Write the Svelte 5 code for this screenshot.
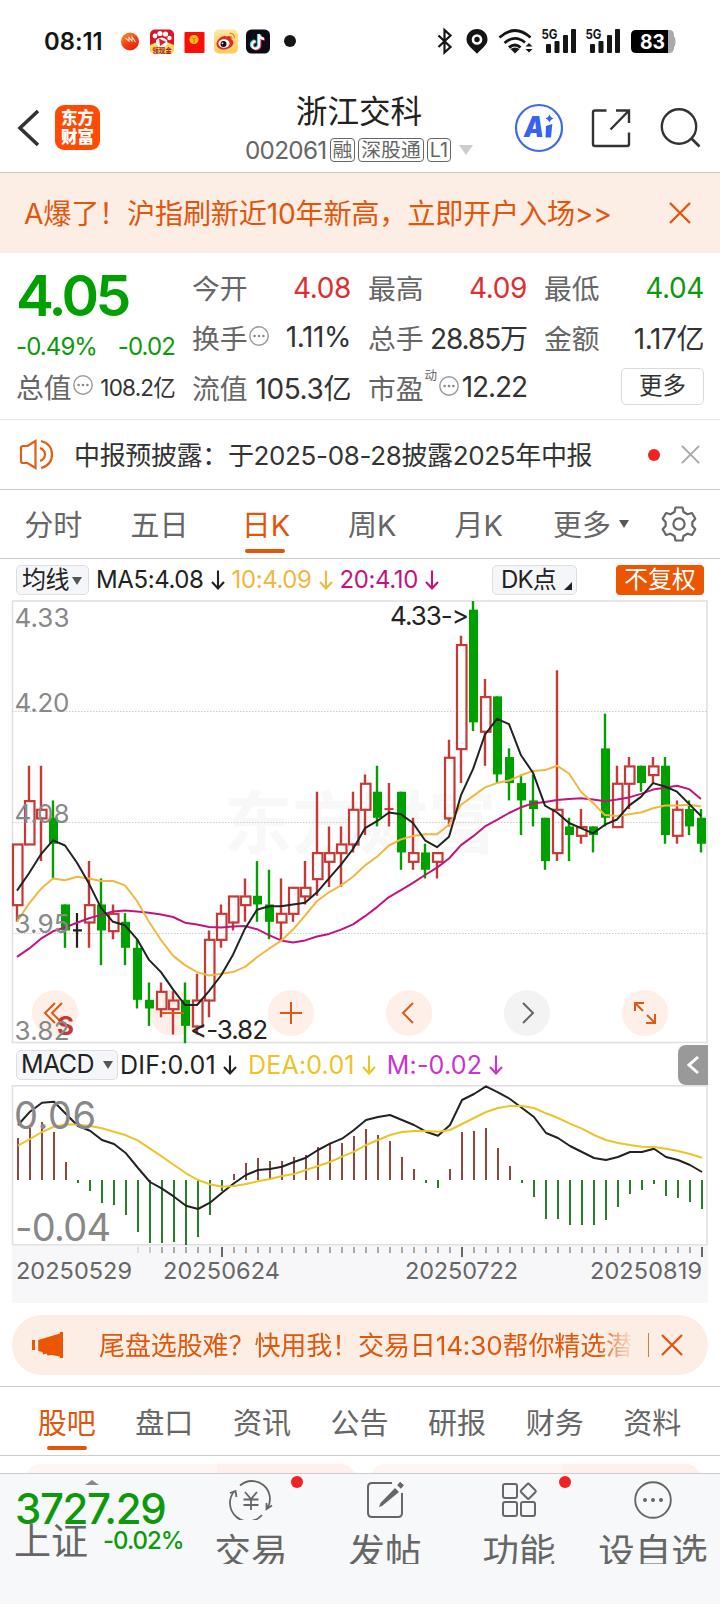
<script>
  // closes of the 19 sessions before the first visible one, needed for the averages
  const history = [
    3.91, 3.86, 3.88, 3.86, 3.84, 3.88, 3.87, 3.89, 3.91, 3.89,
    3.89, 3.92, 3.93, 3.97, 3.91, 4.0, 3.98, 3.97, 3.98
  ];

  // [open, close, high, low]
  const sessions = [
    [3.98, 4.05, 4.05, 3.96], [4.05, 4.1, 4.14, 4.05], [4.08, 4.09, 4.14, 4.03],
    [4.08, 4.05, 4.1, 4.01], [3.98, 3.95, 3.98, 3.93], [3.95, 3.95, 3.97, 3.93],
    [3.96, 3.98, 4.03, 3.93], [3.98, 3.95, 4.01, 3.91], [3.95, 3.97, 3.98, 3.94],
    [3.96, 3.93, 3.97, 3.91], [3.93, 3.87, 3.94, 3.86], [3.87, 3.86, 3.89, 3.84],
    [3.86, 3.88, 3.89, 3.85], [3.86, 3.87, 3.88, 3.83], [3.87, 3.84, 3.89, 3.82],
    [3.84, 3.87, 3.9, 3.83], [3.87, 3.94, 3.95, 3.85], [3.94, 3.97, 3.98, 3.93],
    [3.96, 3.99, 3.99, 3.95], [3.98, 3.99, 4.01, 3.96], [3.99, 3.98, 4.03, 3.96],
    [3.98, 3.96, 4.02, 3.94], [3.96, 3.97, 4.01, 3.94], [3.97, 4.0, 4.0, 3.96],
    [3.99, 4.0, 4.03, 3.98], [4.01, 4.04, 4.11, 3.99], [4.03, 4.04, 4.07, 4.0],
    [4.04, 4.05, 4.07, 4.0], [4.05, 4.09, 4.11, 4.04], [4.09, 4.12, 4.13, 4.06],
    [4.11, 4.08, 4.14, 4.07], [4.09, 4.09, 4.12, 4.07], [4.11, 4.04, 4.11, 4.02],
    [4.03, 4.04, 4.08, 4.02], [4.04, 4.02, 4.05, 4.01], [4.03, 4.04, 4.04, 4.01],
    [4.08, 4.15, 4.17, 4.07], [4.16, 4.28, 4.29, 4.12], [4.32, 4.19, 4.33, 4.18],
    [4.18, 4.22, 4.24, 4.14], [4.22, 4.13, 4.22, 4.12], [4.15, 4.12, 4.16, 4.1],
    [4.12, 4.1, 4.13, 4.06], [4.1, 4.09, 4.13, 4.07], [4.08, 4.03, 4.08, 4.02],
    [4.04, 4.09, 4.25, 4.03], [4.07, 4.06, 4.08, 4.03], [4.06, 4.07, 4.09, 4.05],
    [4.07, 4.06, 4.07, 4.04], [4.16, 4.08, 4.2, 4.07], [4.07, 4.12, 4.14, 4.07],
    [4.12, 4.14, 4.15, 4.09], [4.14, 4.12, 4.14, 4.11], [4.13, 4.14, 4.15, 4.12],
    [4.14, 4.06, 4.15, 4.05], [4.06, 4.09, 4.1, 4.05], [4.09, 4.07, 4.1, 4.06],
    [4.08, 4.05, 4.09, 4.04]
  ];

  const hist = [
    126, 156, 174, 144, 54, -9, -33, -69, -75, -105, -156, -189, -189, -186, -195, -171, -105, -33,
    18, 51, 66, 57, 57, 69, 75, 99, 108, 111, 132, 153, 135, 117, 69, 33, -9, -24, 33, 144, 147, 156,
    96, 42, -9, -51, -117, -117, -135, -135, -135, -120, -81, -42, -30, -12, -48, -54, -66, -87
  ];
  const dif = [
    165, 205, 232, 235, 198, 162, 148, 120, 108, 80, 36, -6, -26, -50, -77, -87, -68, -38, -10, 15,
    30, 33, 40, 54, 67, 90, 109, 124, 150, 180, 189, 195, 180, 165, 145, 133, 165, 240, 258, 281,
    263, 243, 216, 189, 141, 126, 102, 84, 66, 60, 69, 84, 84, 94, 69, 60, 45, 24
  ];
  const dea = [
    103, 123, 144, 160, 167, 166, 162, 155, 145, 134, 118, 94, 70, 45, 20, 0, -13, -20, -18, -12,
    -4, 3, 12, 18, 30, 42, 54, 70, 85, 105, 120, 135, 144, 147, 147, 145, 150, 168, 186, 204,
    216, 222, 222, 216, 200, 186, 169, 154, 135, 120, 111, 105, 100, 99, 94, 87, 78, 67
  ];

  const px = (i) => 17 + i * 12;
  const py = (p) => 1 + (4.33 - p) * 867;
  const my = (v) => 95 - v / 3;

  const closes = [...history, ...sessions.map((s) => s[1])];

  function average(n) {
    return sessions
      .map((_, i) => {
        const end = i + history.length + 1;
        const sum = closes.slice(end - n, end).reduce((a, b) => a + b, 0);
        return `${px(i)},${py(sum / n).toFixed(1)}`;
      })
      .join(' ');
  }

  const macdLine = (values) => values.map((v, i) => `${18 + i * 12},${my(v).toFixed(1)}`).join(' ');

  const candles = sessions.map(([open, close, high, low], i) => ({
    x: px(i),
    top: py(Math.max(open, close)),
    bottom: py(Math.min(open, close)),
    high: py(high),
    low: py(low),
    kind: i === 5 ? 'flat' : close >= open ? 'up' : 'down'
  }));

  const ticks = Array.from({ length: 48 }, (_, k) => k + 10);

  const priceLabels = [
    ['4.33', 27], ['4.20', 112], ['4.08', 223], ['3.95', 333], ['3.82', 440]
  ];
  const dates = [
    ['20250529', 16, 116], ['20250624', 163, 117], ['20250722', 405, 113], ['20250819', 590, 112]
  ];

  const periods = ['分时', '五日', '日K', '周K', '月K'];
  const sections = ['股吧', '盘口', '资讯', '公告', '研报', '财务', '资料'];
</script>

{#snippet dots()}
  <svg class="dots" width="20" height="20" viewBox="0 0 20 20">
    <circle cx="10" cy="10" r="9.2" fill="none" stroke="#999" stroke-width="1.4" />
    <g fill="#888"><circle cx="5.6" cy="10" r="1.3" /><circle cx="10" cy="10" r="1.3" /><circle cx="14.4" cy="10" r="1.3" /></g>
  </svg>
{/snippet}

{#snippet down()}
  <svg class="down" width="14" height="20" viewBox="0 0 14 20">
    <path d="M7 .5v18M1 12l6 6.5 6-6.5" fill="none" stroke="currentColor" stroke-width="2.1" />
  </svg>
{/snippet}

{#snippet cross(size)}
  <svg height={size} width={size} viewBox="0 0 22 22">
    <path d="M1 1l20 20M21 1L1 21" fill="none" stroke="currentColor" stroke-width="2.3" />
  </svg>
{/snippet}

<div class="screen" lang="zh-CN">
  <div class="status">
    <span class="time">08:11</span>
    <svg width="180" height="30" viewBox="120 27 180 30">
      <defs>
        <linearGradient id="ball" x2="0.6" y2="1"><stop offset="0" stop-color="#ff9a1f" /><stop offset="0.6" stop-color="#f2401a" /><stop offset="1" stop-color="#e8230f" /></linearGradient>
        <linearGradient id="weibo" x2="0" y2="1"><stop offset="0" stop-color="#ffe9a0" /><stop offset="1" stop-color="#fdc95a" /></linearGradient>
      </defs>
      <circle cx="130" cy="41.5" r="9" fill="url(#ball)" />
      <path d="M125.500 38l3.500 3v-3.500l3 3.500v-4l3.500 5" fill="none" stroke="#ffe3c8" stroke-width="1.1" />
      <rect x="150" y="29.5" width="24" height="24" rx="5" fill="#dc1426" />
      <path d="M150 45q12-7 24 0v4q0 4.500-5 4.500h-14q-5 0-5-4.500z" fill="#ffd75e" />
      <g fill="#fff"><circle cx="155" cy="36" r="2.4" /><circle cx="160" cy="33.5" r="2.6" /><circle cx="165.5" cy="34" r="2.6" /><circle cx="169.5" cy="38" r="2.2" /><path d="M156 40q6-5 11 0 2 6-5 8-7-2-6-8z" /></g>
      <path d="M159 38.500l7 3.500-6 4z" fill="#e21c34" />
      <text x="162" y="52.5" class="tiny">领现金</text>
      <rect x="184.5" y="32" width="20" height="21" rx="1" fill="#fb0d08" />
      <circle cx="194" cy="39.5" r="4.6" fill="#ffc21a" />
      <path d="M192 37.500l2 2 2-2M194 39.500v3" stroke="#b36200" stroke-width="1" fill="none" />
      <rect x="214" y="29.5" width="24" height="24" rx="5" fill="url(#weibo)" />
      <path d="M216.500 44c0-5 7-9.500 9.500-7.500 4-1.500 6 0 5.500 3 5 3-.5 10-7.500 10-4 0-7.500-2-7.500-5.500z" fill="#e02a2a" />
      <ellipse cx="224" cy="43.5" rx="5.6" ry="4.2" fill="#fff" /><circle cx="223.5" cy="44" r="3" fill="#111" /><circle cx="222.5" cy="43.3" r=".9" fill="#fff" />
      <path d="M229.500 33.500q5-.5 5 5M230 36.500q2 0 2 2.500" fill="none" stroke="#f2921d" stroke-width="1.3" />
      <rect x="246" y="29.5" width="24" height="24" rx="5.5" fill="#0b0b16" />
      <g fill="none" stroke-width="2.7"><path d="M258.300 34v10.500a3.600 3.600 0 1 1-3.600-3.600M258.300 34q.8 4 5 4.300" stroke="#25e8e4" /><path d="M260 35v10.500a3.600 3.600 0 1 1-3.600-3.600M260 35q.8 4 4.800 4.300" stroke="#f8345c" /><path d="M259.200 34.300V45a3.600 3.600 0 1 1-3.600-3.600M259.200 34.500q.8 4 4.800 4.300" stroke="#fff" stroke-width="2.2" /></g>
      <circle cx="290" cy="41" r="6" fill="#151515" />
    </svg>
    <svg class="signals" width="250" height="30" viewBox="430 27 250 30">
      <path d="M438.500 35.500l12 11.500-6 5.500V30l6 5.500-12 11.500" fill="none" stroke="#151515" stroke-width="2.2" />
      <path d="M477 29c6 0 10.500 4.500 10.500 10.300 0 5-3.500 7.500-10.500 14.500-7-7-10.500-9.500-10.500-14.500C466.500 33.500 471 29 477 29z" fill="#151515" />
      <circle cx="477" cy="39.5" r="4" fill="#151515" stroke="#fff" stroke-width="2.6" />
      <g fill="none" stroke="#151515" stroke-width="2.7"><path d="M499.500 37.500q15.500-14 31 0" /><path d="M504.500 43q10.500-9 20.500-.5" /><path d="M509 47.500q6-5 11.500 0" stroke-width="3" /></g>
      <path d="M510.500 49q4.500-3 9 0l-4.500 4.500z" fill="#151515" />
      <path d="M525.500 46.500l3.500-3.500 3.500 3.500zM525.500 49l3.500 3.500 3.500-3.500z" fill="#151515" />
      {#each [546, 590] as x}
        <g fill="#151515">
          <rect {x} y="44" width="5" height="9" rx="1" /><rect x={x + 8.5} y="41" width="5" height="12" rx="1" />
          <rect x={x + 17} y="35" width="5" height="18" rx="1" /><rect x={x + 25} y="29" width="5" height="24" rx="1" />
        </g>
        <text x={x - 4.5} y="38.5" class="net" textLength="16" lengthAdjust="spacingAndGlyphs">5G</text>
      {/each}
      <path d="M668 30h1q5 0 5 5v1.500q1.500 1 1.500 5.200t-1.500 5.200V48q0 5-5 5h-1z" fill="#aaa" />
      <path d="M636 30h32v23h-32q-5 0-5-5V35q0-5 5-5z" fill="#000" />
      <text x="640" y="49" class="battery" textLength="25" lengthAdjust="spacingAndGlyphs">83</text>
    </svg>
  </div>

  <header>
    <svg class="back" width="24" height="38" viewBox="0 0 24 38"><path d="M21 2L3 19l18 17" fill="none" stroke="#333" stroke-width="3.6" /></svg>
    <div class="logo"><span>东方</span><span>财富</span></div>
    <div class="title">
      <div class="name">浙江交科</div>
      <div class="code"><span class="num">002061</span><i>融</i><i>深股通</i><i>L1</i><b class="caret"></b></div>
    </div>
    <svg class="tools" width="190" height="50" viewBox="513 103 190 50" fill="none">
      <circle cx="539" cy="128" r="23" stroke="#4169e1" stroke-width="2.2" />
      <text x="524" y="137" class="ai" textLength="20" lengthAdjust="spacingAndGlyphs">A</text>
      <path d="M546 126l6.300-2-1.300 13.500h-5.500z" fill="#3763f0" />
      <path d="M549.500 114.500q.8 3.200 4 4-3.200.8-4 4-.8-3.200-4-4 3.200-.8 4-4z" fill="#3763f0" />
      <path d="M606.500 110.500H595q-2 0-2 2V144q0 2 2 2h32q2 0 2-2v-11.500M616 110.500h13V123M628.500 111l-18 18.500" stroke="#333" stroke-width="2.4" />
      <circle cx="679" cy="126.500" r="17.2" stroke="#333" stroke-width="2.4" /><path d="M691.500 138.500l8 8" stroke="#333" stroke-width="2.6" />
    </svg>
  </header>

  <div class="banner">
    <span>A爆了！沪指刷新近10年新高，立即开户入场&gt;&gt;</span>
    {@render cross(22)}
  </div>

  <section class="quote">
    <div class="main">
      <div class="price">4.05</div>
      <div class="change"><span>-0.49%</span><span>-0.02</span></div>
      <div class="total"><span class="label">总值</span>{@render dots()}<span class="small">108.2亿</span></div>
    </div>
    <div class="col">
      <div><span class="label">今开</span><span class="red">4.08</span></div>
      <div><span class="label">换手</span>{@render dots()}<span class="val loose">1.11%</span></div>
      <div><span class="label">流值</span><span class="val loose">105.3亿</span></div>
    </div>
    <div class="col">
      <div><span class="label">最高</span><span class="red">4.09</span></div>
      <div><span class="label">总手</span><span class="val">28.85万</span></div>
      <div><span class="label">市盈</span><sup>动</sup>{@render dots()}<span class="val">12.22</span></div>
    </div>
    <div class="col">
      <div><span class="label">最低</span><span class="green">4.04</span></div>
      <div><span class="label">金额</span><span class="val loose">1.17亿</span></div>
      <div><span class="more">更多</span></div>
    </div>
  </section>

  <div class="notice">
    <svg width="36" height="32" viewBox="0 0 36 32" fill="none" stroke="#dd6014" stroke-width="2.2">
      <path d="M3 9q0-2 2-2h4.500L17.500 2v27L9.500 24H5q-2 0-2-2z" /><path d="M22 9q5 2 5 6.500T22 22M23 2q11 3 11 13.500T23 29" />
    </svg>
    <span class="text">中报预披露：于2025-08-28披露2025年中报</span>
    <b class="dot"></b>
    {@render cross(19)}
  </div>

  <nav class="periods">
    {#each periods as name}
      <span class:active={name === '日K'}>{name}</span>
    {/each}
    <span class="rest">更多<b class="tri"></b></span>
    <svg width="36" height="36" viewBox="0 0 36 36" fill="none" stroke="#666" stroke-width="2.2">
      <path d="M14.500 1.500h7l1 4.500 4 2.300 4.500-1.300 3.300 5.800-3 3.400v3.600l3 3.400-3.300 5.800-4.500-1.300-4 2.300-1 4.500h-7l-1-4.500-4-2.300L5 29l-3.300-5.800 3-3.400v-3.600l-3-3.400L5 7l4.500 1.300 4-2.300z" stroke-linejoin="round" />
      <circle cx="18" cy="18" r="5.6" />
    </svg>
  </nav>

  <div class="legend">
    <span class="chip ma">均线<b class="tri"></b></span>
    <span class="item">MA5:4.08{@render down()}</span>
    <span class="item yellow">10:4.09{@render down()}</span>
    <span class="item pink">20:4.10{@render down()}</span>
    <span class="chip dk">DK点<b class="corner"></b></span>
    <span class="adjust">不复权</span>
  </div>

  <svg class="chart" width="720" height="445" viewBox="0 0 720 445">
    <rect x="12.5" y="1" width="694.5" height="441.5" fill="none" stroke="#e0e0e0" stroke-width="1.6" />
    <text x="224" y="248" class="mark" textLength="272">东方财富</text>
    {#each [111.5, 222.5, 333.5] as y}
      <path d="M12 {y}H708" stroke="#ccc" stroke-dasharray="1.5 1.5" />
    {/each}
    {#each [55, 173, 291, 409, 527, 645] as cx}
      <circle {cx} cy="413" r="23" fill={cx === 527 ? '#f3f3f3' : '#fef0e9'} />
    {/each}
    {#each candles as c}
      {#if c.kind === 'up'}
        <path d="M{c.x} {c.high}V{c.top}M{c.x} {c.bottom}V{c.low}" stroke="#c43a36" stroke-width="2.4" />
        {#if c.bottom - c.top > 1}
          <rect x={c.x - 4} y={c.top + 0.7} width="9.5" height={c.bottom - c.top} fill="none" stroke="#c43a36" stroke-width="2.2" />
        {:else}
          <path d="M{c.x - 4.5} {c.top}h9" stroke="#c43a36" stroke-width="2" />
        {/if}
      {:else if c.kind === 'down'}
        <path d="M{c.x} {c.high}V{c.low}" stroke="#00a000" stroke-width="2.4" />
        <rect x={c.x - 4} y={c.top} width="9" height={c.bottom - c.top} fill="#00a000" />
      {:else}
        <path d="M{c.x} {c.high}V{c.low}M{c.x - 4} {c.top}h9" stroke="#222" stroke-width="2.2" />
      {/if}
    {/each}
    <g fill="none" stroke-width="2" stroke-linejoin="round">
      <polyline points={average(20)} stroke="#c2147f" />
      <polyline points={average(10)} stroke="#f0b840" />
      <polyline points={average(5)} stroke="#222" />
    </g>
    <g fill="none" stroke="#dd5a14" stroke-width="2">
      <path d="M55 403l-10 10 10 10M62 403l-10 10 10 10M162 413h22M280 413h22M291 402v22M413 403l-10 10 10 10" />
      <path d="M523 403l10 10-10 10" stroke="#666" />
      <path d="M643 411l-8-8M635 411v-8h9M647 415l8 8M655 414v9h-9" />
    </g>
    <text x="57" y="435" class="sell">S</text>
    {#each priceLabels as [text, y]}
      <text x="14.5" {y} class="price-label" textLength="55">{text}</text>
    {/each}
    <text x="390" y="25" class="peak" textLength="79">4.33-&gt;</text>
    <text x="190" y="439" class="peak" textLength="78">&lt;-3.82</text>
  </svg>

  <div class="legend macd">
    <span class="chip">MACD<b class="tri"></b></span>
    <span class="item">DIF:0.01{@render down()}</span>
    <span class="item gold">DEA:0.01{@render down()}</span>
    <span class="item violet">M:-0.02{@render down()}</span>
    <span class="fold"><svg width="14" height="20" viewBox="0 0 14 20"><path d="M12 2L3 10l9 8" fill="none" stroke="#fff" stroke-width="3" /></svg></span>
  </div>

  <svg class="chart" width="720" height="161" viewBox="0 0 720 161">
    <rect x="12.5" y=".8" width="694.5" height="159" fill="none" stroke="#e0e0e0" stroke-width="1.6" />
    {#each hist as v, i}
      <rect x={17 + i * 12} y={v > 0 ? my(v) : 95} width="2" height={Math.abs(v) / 3} fill={v > 0 ? '#8f4742' : '#2a7d2a'} />
    {/each}
    <g fill="none" stroke-width="2" stroke-linejoin="round">
      <polyline points={macdLine(dif)} stroke="#222" />
      <polyline points={macdLine(dea)} stroke="#ebc428" />
    </g>
    <text x="14" y="43.5" class="macd-label" textLength="82">0.06</text>
    <text x="15" y="156" class="macd-label" textLength="96">-0.04</text>
  </svg>

  <svg class="chart" width="720" height="57" viewBox="0 0 720 57">
    <rect x="12" width="696" height="57" fill="#f7f7f9" />
    {#each ticks as i}
      <rect x={17 + i * 12} y="1" width="2" height={[17, 37, 57].includes(i) ? 10 : 6} fill={[17, 37, 57].includes(i) ? '#666' : '#aaa'} opacity={i < 12 ? (i - 9) * 0.3 : 1} />
    {/each}
    {#each dates as [text, x, length]}
      <text {x} y="33" class="date" textLength={length}>{text}</text>
    {/each}
  </svg>

  <div class="promo">
    <svg width="31" height="26" viewBox="0 0 30 26" preserveAspectRatio="none" fill="#ec5502"><path d="M0 8h3v10H0zM6 8l21-6.500V0h3v26h-3v-1.500l-8-1.500-4 .5-1-2-3 1-1-2.500-4-1z" /></svg>
    <div class="text">尾盘选股难？快用我！交易日14:30帮你精选潜力</div>
    <b class="bar"></b>
    {@render cross(22)}
  </div>

  <nav class="sections">
    {#each sections as name, i}
      <span class:active={i === 0}>{name}</span>
    {/each}
  </nav>

  <div class="cards"><div></div><div></div></div>

  <footer>
    <div class="index">
      <b class="up"></b>
      <div class="points">3727.29</div>
      <div class="line"><span>上证</span><em>-0.02%</em></div>
    </div>
    <div class="action">
      <svg width="44" height="40" viewBox="0 0 44 40" fill="none" stroke="#666" stroke-width="1.8">
        <path d="M11 5.500A18 18 0 0 1 38.500 28M33 35A18 18 0 0 1 5.500 11M1 13l5.500-2 1 6M43 25.500L37.500 29v-6" />
        <path d="M16 12l6 7 6-7M14.500 19.500h15M14.500 25h15M22 19v11" />
      </svg>
      <span>交易</span><b class="dot"></b>
    </div>
    <div class="action">
      <svg width="40" height="40" viewBox="0 0 40 40" fill="none" stroke="#666" stroke-width="2">
        <path d="M27 3H7Q3 3 3 7v26q0 4 4 4h26q4 0 4-4V13" /><path d="M30 8l4 4L17 26l-3 1 1.500-4z" fill="#666" stroke="none" /><path d="M34 7l3-3.500" stroke-width="5" />
      </svg>
      <span>发帖</span>
    </div>
    <div class="action">
      <svg width="40" height="40" viewBox="0 0 40 40" fill="none" stroke="#666" stroke-width="2">
        <rect x="4" y="4" width="14" height="14" rx="2" /><rect x="4" y="22" width="14" height="14" rx="2" /><rect x="22" y="22" width="14" height="14" rx="2" />
        <rect x="23.5" y="5.5" width="11.5" height="11.5" rx="1.5" transform="rotate(45 29.25 11.25)" />
      </svg>
      <span>功能</span><b class="dot"></b>
    </div>
    <div class="action">
      <svg width="40" height="40" viewBox="0 0 40 40">
        <circle cx="20" cy="20" r="17.8" fill="none" stroke="#666" stroke-width="1.9" />
        <g fill="#666"><circle cx="12" cy="20" r="2" /><circle cx="20" cy="20" r="2" /><circle cx="28" cy="20" r="2" /></g>
      </svg>
      <span>设自选</span>
    </div>
  </footer>
</div>

<style>
  :global(body) {
    background: #fff;
  }

  .screen {
    width: 720px;
    height: 1604px;
    overflow: hidden;
    display: flex;
    flex-direction: column;
    background: #fff;
    color: #333;
    font-family: Inter, "Noto Sans CJK SC", sans-serif;
    font-feature-settings: "calt" 0;
    white-space: nowrap;
  }

  .screen > * {
    flex-shrink: 0;
    box-sizing: border-box;
  }

  svg {
    display: block;
    flex-shrink: 0;
  }

  i, em { font-style: normal; }

  /* status bar */
  .status {
    height: 83px;
    display: flex;
    align-items: center;
    padding: 0 40px 0 44px;
  }

  .time {
    width: 76px;
    font-size: 23.8px;
    font-weight: 600;
    color: #151515;
  }

  .signals { margin-left: auto; }
  .tiny { font-size: 6.5px; font-weight: 700; fill: #a3161d; text-anchor: middle; }
  .net { font-size: 13.5px; font-weight: 700; fill: #151515; }
  .battery { font-size: 20px; font-weight: 700; fill: #fff; }

  /* header */
  header {
    height: 90px;
    display: flex;
    align-items: center;
    border-bottom: 1px solid #ccc;
    padding: 0 17px;
  }

  .logo {
    width: 45px;
    height: 45px;
    margin-left: 14px;
    border-radius: 9px;
    background: #fe4a05;
    color: #fff;
    font-size: 16.5px;
    font-weight: 900;
    line-height: 19px;
    display: flex;
    flex-direction: column;
    align-items: center;
    justify-content: center;
  }

  .title {
    width: 240px;
    margin-left: 139px;
    display: flex;
    flex-direction: column;
    align-items: center;
  }

  .name {
    font-size: 31.6px;
    line-height: 40px;
    color: #222;
  }

  .code {
    display: flex;
    align-items: center;
    gap: 3px;
    height: 28px;
    margin-top: 4px;
    color: #666;
  }

  .code .num { font-size: 24.3px; letter-spacing: -.7px; }

  .code i {
    border: 1px solid #666;
    border-radius: 4px;
    padding: 0 2px;
    font-size: 19.8px;
    line-height: 22px;
  }

  .caret {
    margin-left: 5px;
    border: 7px solid transparent;
    border-top: 10px solid #ccc;
    border-bottom: 0;
  }

  .tools { margin-left: auto; }
  .ai { font-size: 28px; font-weight: 900; fill: #3763f0; font-style: italic; }

  .banner {
    height: 80px;
    display: flex;
    align-items: center;
    justify-content: space-between;
    padding: 0 29px 0 24px;
    background: #fcede5;
    color: #e0570c;
    font-size: 28.2px;
    letter-spacing: -.25px;
  }

  .banner span { margin-top: -3px; }

  /* quote */
  .quote {
    height: 167px;
    display: flex;
    gap: 18px;
    padding: 0 16px 0 16px;
    border-bottom: 1px solid #e6e6e6;
  }

  .main { width: 159px; padding-top: 9px; }

  .price {
    height: 68px;
    line-height: 68px;
    font-size: 57px;
    font-weight: 600;
    letter-spacing: -3.6px;
    color: #00a000;
  }

  .change {
    height: 32px;
    display: flex;
    align-items: center;
    justify-content: space-between;
    font-size: 24px;
    letter-spacing: -.9px;
    color: #0c9a0c;
  }

  .total {
    height: 50px;
    display: flex;
    align-items: center;
  }

  .label { margin: -3px 0 0 -1px; font-size: 27.8px; color: #666; }
  .main .label { margin-left: 0; }
  .dots { margin: -4px 0 0 1px; }

  .small, .val, .red, .green {
    margin: -2px 0 0 auto;
    font-size: 28px;
    letter-spacing: -1.1px;
  }

  .small { font-size: 22.5px; letter-spacing: -.8px; }
  .red { margin-top: 0; letter-spacing: -.4px; color: #dc3030; }
  .green { margin-top: 0; letter-spacing: -.4px; color: #0c9a0c; }
  .loose { letter-spacing: -.4px; }

  .col { width: 158px; padding-top: 10px; }
  .col:last-child { width: 159px; }

  .col > div {
    height: 50px;
    display: flex;
    align-items: center;
  }

  sup {
    font-size: 12.5px;
    color: #666;
    margin: -24px 1px 0 1px;
    line-height: 1;
  }

  .more {
    width: 81px;
    height: 35px;
    margin: -4px 0 0 auto;
    border: 1.3px solid #d8dbdc;
    border-radius: 5px;
    text-align: center;
    font-size: 23.5px;
    line-height: 34px;
  }

  .notice {
    height: 70px;
    display: flex;
    align-items: center;
    padding: 0 20px 0 18px;
    border-bottom: 1.3px solid #ccc;
    color: #aaa;
  }

  .notice .text {
    margin: -3px 0 0 20px;
    font-size: 26px;
    letter-spacing: -.35px;
    color: #333;
  }

  .dot {
    width: 12px;
    height: 12px;
    border-radius: 50%;
    background: #f02222;
  }

  .notice .dot { margin: 0 21px 0 auto; }

  /* tabs */
  .periods {
    height: 69px;
    display: flex;
    align-items: center;
    border-bottom: 1.3px solid #ccc;
    font-size: 29px;
    color: #666;
  }

  .periods span {
    position: relative;
    width: 106.4px;
    margin-top: -2px;
    text-align: center;
  }

  .periods .rest {
    width: 118px;
    margin-right: 11px;
  }

  .periods .active { color: #e0570c; }

  .active::after {
    content: "";
    position: absolute;
    left: 50%;
    bottom: -9px;
    width: 40px;
    height: 4px;
    margin-left: -21px;
    border-radius: 2px;
    background: #e0570c;
  }

  .tri {
    display: inline-block;
    border: 5px solid transparent;
    border-top: 8px solid #555;
    border-bottom: 0;
    margin-left: 7px;
    vertical-align: middle;
  }

  .rest .tri { margin: -8px 0 0 8px; }

  /* chart legends */
  .legend {
    height: 41px;
    display: flex;
    align-items: center;
    padding: 0 16px;
    font-size: 24px;
    letter-spacing: -.4px;
    color: #222;
  }

  .chip {
    position: relative;
    height: 30px;
    box-sizing: border-box;
    border: 1px solid #dcdee0;
    border-radius: 5px;
    background: #f5f6f9;
    line-height: 27px;
    padding-left: 5px;
  }

  .chip.ma { width: 73px; margin-right: 7px; font-size: 24px; }
  .chip.ma .tri { margin-left: 3px; }

  .item {
    display: flex;
    align-items: center;
    margin-right: 7px;
  }

  .down { margin-left: 7px; }
  .yellow { color: #f0b840; }
  .pink { color: #c2147f; }

  .chip.dk { width: 85px; margin-left: auto; padding-left: 8px; letter-spacing: -.8px; }

  .corner {
    position: absolute;
    right: 4px;
    bottom: 4px;
    border: 4px solid transparent;
    border-right-color: #222;
    border-bottom-color: #222;
  }

  .adjust {
    width: 88px;
    height: 30px;
    margin-left: 39px;
    border-radius: 4px;
    background: #ec5502;
    color: #fff;
    text-align: center;
    font-size: 23.8px;
    line-height: 29px;
    letter-spacing: 0;
  }

  .macd { height: 40px; padding-right: 12px; font-size: 25px; letter-spacing: .2px; }
  .macd .chip { width: 102px; margin-right: 2px; padding-left: 4px; letter-spacing: -.6px; }
  .macd .chip .tri { margin: -3px 0 0 9px; }
  .macd .item { margin-right: 11px; }
  .gold { color: #ebc428; }
  .violet { color: #cc33cc; }

  .fold {
    width: 30px;
    height: 40px;
    margin-left: auto;
    border-radius: 8px 0 0 8px;
    background: #999;
    display: flex;
    align-items: center;
    justify-content: center;
  }

  .mark { font-size: 68px; font-weight: 700; fill: #f8f8f8; }
  .price-label { font-size: 26px; fill: #888; }
  .peak { font-size: 26px; fill: #222; }
  .sell { font-size: 26px; font-weight: 700; fill: #c43a36; }
  .macd-label { font-size: 38px; fill: #888; }
  .date { font-size: 23.5px; fill: #666; }

  .promo {
    width: 696px;
    height: 60px;
    margin: 12px 12px 11px;
    padding: 0 25px 0 20px;
    border-radius: 30px;
    background: #fcede5;
    color: #e0570c;
    display: flex;
    align-items: center;
  }

  .promo .text {
    width: 537px;
    margin: -4px 0 0 36px;
    overflow: hidden;
    font-size: 26px;
    letter-spacing: -.1px;
    -webkit-mask-image: linear-gradient(90deg, #000 93%, transparent);
    mask-image: linear-gradient(90deg, #000 93%, transparent);
  }

  .promo .bar {
    width: 1px;
    height: 24px;
    margin: 0 12px 0 13px;
    background: #c98042;
  }

  .sections {
    height: 70px;
    display: flex;
    align-items: center;
    padding: 0 19px 0 18px;
    border-top: 1.3px solid #ccc;
    border-bottom: 1.3px solid #ccc;
    font-size: 29px;
    color: #666;
  }

  .sections span {
    position: relative;
    flex: 1;
    text-align: center;
  }

  .sections .active { color: #e0570c; }
  .sections .active::after { bottom: -8px; margin-left: -20px; }

  .cards {
    height: 17px;
    display: flex;
    gap: 16px;
    padding: 8px 20px 0 26px;
    overflow: hidden;
  }

  .cards div {
    width: 329px;
    height: 30px;
    border-radius: 14px;
    background: linear-gradient(90deg, #fff5f3 58%, #fff0ee 58%);
  }

  /* bottom bar */
  footer {
    height: 131px;
    display: flex;
    border-top: 1.3px solid #ccc;
    background: #f7f8fa;
    color: #666;
  }

  .index { width: 184px; position: relative; }

  .up {
    position: absolute;
    left: 85px;
    top: 6px;
    border: 7px solid transparent;
    border-bottom: 5px solid #888;
    border-top: 0;
  }

  .points {
    margin: 14px 0 0 15px;
    height: 42px;
    line-height: 42px;
    font-size: 42px;
    font-weight: 500;
    letter-spacing: -1.4px;
    color: #0c9a0c;
  }

  .line {
    display: flex;
    align-items: center;
    margin: -15px 0 0 14px;
    height: 48px;
    font-size: 37px;
  }

  .line em {
    margin: 3px 0 0 15px;
    font-size: 24px;
    letter-spacing: -1px;
    color: #0c9a0c;
    font-weight: 500;
  }

  .action {
    position: relative;
    width: 134px;
    height: 90px;
    overflow: hidden;
    display: flex;
    flex-direction: column;
    align-items: center;
    padding-top: 6px;
    box-sizing: border-box;
  }

  .action span {
    margin-top: 7px;
    font-size: 36.5px;
    line-height: 50px;
  }

  .action .dot {
    position: absolute;
    left: 107px;
    top: 2px;
  }
</style>
